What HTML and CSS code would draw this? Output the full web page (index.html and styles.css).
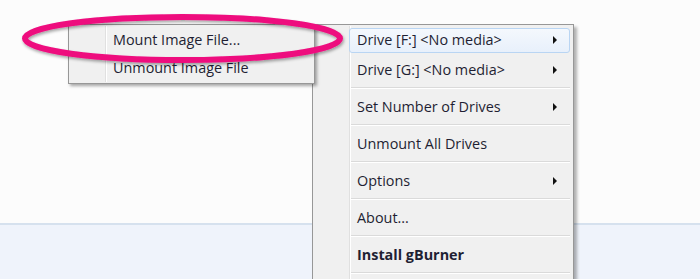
FILE: index.html
```
<!DOCTYPE html>
<html>
<head>
<meta charset="utf-8">
<link rel="stylesheet" href="styles.css">
</head>
<body>
<div class="screen">
  <div class="pane"></div>
  <div class="footer"></div>

  <div class="menu menu-main">
    <div class="gutter"></div>
    <div class="item hot"><span class="label">Drive [F:] &lt;No media&gt;</span><span class="arrow"></span></div>
    <div class="item"><span class="label">Drive [G:] &lt;No media&gt;</span><span class="arrow"></span></div>
    <div class="sep"></div>
    <div class="item"><span class="label">Set Number of Drives</span><span class="arrow"></span></div>
    <div class="sep"></div>
    <div class="item"><span class="label">Unmount All Drives</span></div>
    <div class="sep"></div>
    <div class="item"><span class="label">Options</span><span class="arrow"></span></div>
    <div class="sep"></div>
    <div class="item"><span class="label">About...</span></div>
    <div class="sep"></div>
    <div class="item"><span class="label bold">Install gBurner</span></div>
    <div class="sep"></div>
  </div>

  <div class="menu menu-sub">
    <div class="gutter"></div>
    <div class="item small"><span class="label">Mount Image File...</span></div>
    <div class="item small"><span class="label">Unmount Image File</span></div>
  </div>

  <svg class="ring" width="370" height="84" viewBox="0 0 370 84">
    <defs>
      <filter id="sh" x="-10%" y="-40%" width="120%" height="180%">
        <feDropShadow dx="1" dy="2" stdDeviation="1.6" flood-color="#000" flood-opacity="0.35"/>
      </filter>
    </defs>
    <ellipse cx="182.5" cy="38.5" rx="157.5" ry="21.5" fill="none" stroke="#ee0a7e" stroke-width="6" filter="url(#sh)"/>
  </svg>
</div>
</body>
</html>
```
FILE: styles.css
```
* { box-sizing: border-box; }
html, body { margin: 0; padding: 0; }
body {
  width: 700px;
  height: 279px;
  overflow: hidden;
  font-family: "Open Sans", "Noto Sans", "DejaVu Sans", sans-serif;
  font-size: 14.4px;
  color: #1f1f33;
}
.screen {
  position: relative;
  width: 700px;
  height: 279px;
  display: flex;
  flex-direction: column;
  background: #fcfcfc;
}
.pane {
  height: 223px;
  background: #fcfcfc;
}
.footer {
  flex: 1;
  background: #eff3fb;
  border-top: 2px solid #d6e1ee;
}
.menu {
  position: absolute;
  background: #f0f0f0;
  border: 1px solid #979797;
}
.menu-main {
  left: 312px;
  top: 24px;
  width: 262px;
  height: 270px;
  padding: 1px 3px 0 2px;
  box-shadow: 3px 3px 3px rgba(0,0,0,0.3);
}
.menu-sub {
  left: 68px;
  top: 24px;
  width: 247px;
  height: 60px;
  padding: 2px 3px 0 2px;
  box-shadow: 2px 2px 3px rgba(0,0,0,0.35);
}
.gutter {
  position: absolute;
  top: 1px;
  bottom: 1px;
  left: 36px;
  width: 2px;
  border-left: 1px solid #e0e0e0;
  border-right: 1px solid #ffffff;
}
.item {
  position: relative;
  height: 29px;
  display: flex;
  align-items: center;
  padding-left: 41px;
  padding-right: 12px;
  padding-bottom: 1px;
  border: 1px solid transparent;
  border-radius: 3px;
}
.item.small { height: 28px; padding-bottom: 3px; }
.item.hot {
  margin: 2px 0 2px 34px;
  height: 25px;
  padding-left: 7px;
  padding-bottom: 2px;
  border-color: #b9d5f3;
  background: linear-gradient(#f4f8fd, #e8f0fb);
}
.label { flex: 1; white-space: nowrap; }
.bold { font-weight: bold; }
.arrow {
  width: 0;
  height: 0;
  margin-top: 1px;
  border-left: 4px solid #111;
  border-top: 4px solid transparent;
  border-bottom: 4px solid transparent;
}
.sep {
  height: 2px;
  margin: 3px 0 3px 36px;
  border-top: 1px solid #dadada;
  border-bottom: 1px solid #ffffff;
}
.ring {
  position: absolute;
  left: 0;
  top: 0;
}
```
